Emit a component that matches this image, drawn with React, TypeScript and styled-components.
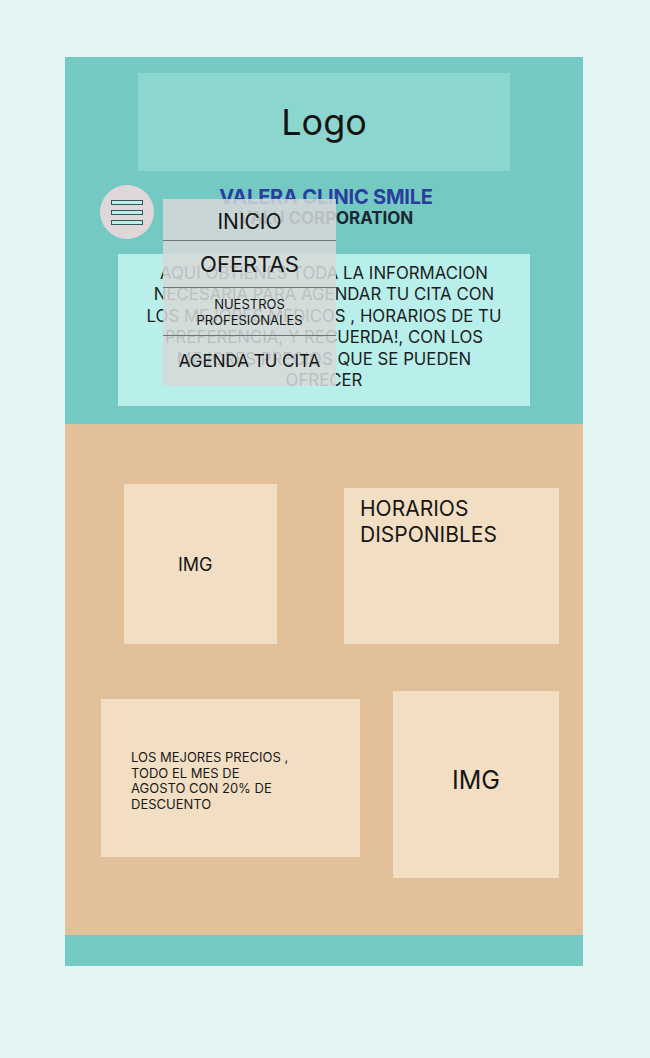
import React from "react";
import styled, { createGlobalStyle } from "styled-components";

const GlobalStyle = createGlobalStyle`
  html, body {
    margin: 0;
    padding: 0;
    background: #e3f5f3;
    font-family: Inter, "Noto Sans", sans-serif;
    color: #1c1c1c;
  }
`;

const Page = styled.div`
  width: 650px;
  min-height: 1058px;
  padding-top: 57px;
  box-sizing: border-box;
`;

const Frame = styled.div`
  position: relative;
  width: 518px;
  margin-left: 65px;
  display: flex;
  flex-direction: column;
`;

const Header = styled.header`
  background: #74c9c2;
  padding: 16px 0 18px;
  display: flex;
  flex-direction: column;
`;

const LogoBox = styled.div`
  width: 372px;
  height: 98px;
  margin-left: 73px;
  background: #8bd7d0;
  display: flex;
  align-items: center;
  justify-content: center;
  font-size: 36px;
  color: #141414;
`;

const TitleBlock = styled.div`
  margin-top: 15px;
  margin-left: 4px;
  display: flex;
  flex-direction: column;
  align-items: center;
  font-weight: 700;
`;

const TitleMain = styled.div`
  font-size: 20px;
  line-height: 22px;
  letter-spacing: -0.2px;
  color: #2b3c9e;
`;

const TitleSub = styled.div`
  font-size: 17px;
  line-height: 20px;
  letter-spacing: -0.1px;
  color: #1b2733;
`;

const InfoBox = styled.div`
  margin: 26px 0 0 53px;
  width: 412px;
  height: 152px;
  box-sizing: border-box;
  padding-top: 9px;
  background: #b8efeb;
  text-align: center;
  font-size: 16.8px;
  line-height: 21.4px;
  white-space: pre-line;
  color: #1d1d1d;
`;

const MenuButton = styled.button`
  position: absolute;
  left: 35px;
  top: 128px;
  width: 54px;
  height: 54px;
  border-radius: 50%;
  border: none;
  padding: 0;
  background: #e0d7da;
  display: flex;
  flex-direction: column;
  align-items: center;
  justify-content: center;
  gap: 5px;
`;

const Bar = styled.span`
  display: block;
  width: 30px;
  height: 3px;
  background: #bdeee8;
  border: 1px solid #35565b;
`;

const Dropdown = styled.nav`
  position: absolute;
  left: 98px;
  top: 142px;
  width: 173px;
  background: rgba(214, 216, 216, 0.86);
  display: flex;
  flex-direction: column;
`;

const MenuItem = styled.div<{ $h: number; $size: number; $divider?: boolean; $pt?: number }>`
  height: ${p => p.$h}px;
  padding-top: ${p => p.$pt || 0}px;
  font-size: ${p => p.$size}px;
  line-height: ${p => Math.round(p.$size * 1.25)}px;
  border-bottom: ${p => (p.$divider ? "1.5px solid #6e7676" : "none")};
  box-sizing: border-box;
  display: flex;
  align-items: center;
  justify-content: center;
  text-align: center;
  white-space: pre-line;
  color: #151515;
`;

const Body = styled.main`
  background: #e2c09a;
  height: 511px;
  box-sizing: border-box;
  padding-top: 60px;
  display: flex;
  flex-direction: column;
  gap: 47px;
`;

const Row = styled.div<{ $left: number; $gap: number }>`
  display: flex;
  align-items: flex-start;
  padding-left: ${p => p.$left}px;
  gap: ${p => p.$gap}px;
`;

const Card = styled.div<{ $w: number; $h: number; $mt?: number }>`
  width: ${p => p.$w}px;
  height: ${p => p.$h}px;
  margin-top: ${p => p.$mt || 0}px;
  background: #f2dfc3;
  box-sizing: border-box;
  display: flex;
`;

const ImgLabel = styled.div<{ $size: number; $left?: number; $lift?: number }>`
  font-size: ${p => p.$size}px;
  margin: ${p => (p.$left ? `auto 0 auto ${p.$left}px` : "auto")};
  padding-bottom: ${p => p.$lift || 0}px;
  color: #161616;
`;

const ScheduleTitle = styled.div`
  padding: 8px 0 0 16px;
  font-size: 21px;
  line-height: 26px;
  color: #161616;
`;

const PromoText = styled.div`
  padding: 51px 0 0 30px;
  font-size: 13px;
  line-height: 15.7px;
  white-space: pre-line;
  color: #1a1a1a;
`;

const Footer = styled.footer`
  background: #74c9c2;
  height: 31px;
`;

const infoText =
  "AQUI OBTIENES TODA LA INFORMACION\nNECESARIA PARA AGENDAR TU CITA CON\nLOS MEJORES MEDICOS , HORARIOS DE TU\nPREFERENCIA, Y RECUERDA!, CON LOS\nMEJORES PRECIOS QUE SE PUEDEN\nOFRECER";

export default function App() {
  return (
    <Page>
      <GlobalStyle />
      <Frame>
        <Header>
          <LogoBox>Logo</LogoBox>
          <TitleBlock>
            <TitleMain>VALERA CLINIC SMILE</TitleMain>
            <TitleSub>VALU CORPORATION</TitleSub>
          </TitleBlock>
          <InfoBox>{infoText}</InfoBox>
        </Header>
        <Body>
          <Row $left={59} $gap={67}>
            <Card $w={153} $h={160}>
              <ImgLabel $size={18} $left={54}>IMG</ImgLabel>
            </Card>
            <Card $w={215} $h={156} $mt={4}>
              <ScheduleTitle>
                HORARIOS
                <br />
                DISPONIBLES
              </ScheduleTitle>
            </Card>
          </Row>
          <Row $left={36} $gap={33}>
            <Card $w={259} $h={158} $mt={8}>
              <PromoText>
                {"LOS MEJORES PRECIOS ,\nTODO EL MES DE\nAGOSTO CON 20% DE\nDESCUENTO"}
              </PromoText>
            </Card>
            <Card $w={166} $h={187}>
              <ImgLabel $size={25} $lift={10}>IMG</ImgLabel>
            </Card>
          </Row>
        </Body>
        <Footer />

        <MenuButton aria-label="menu">
          <Bar />
          <Bar />
          <Bar />
        </MenuButton>
        <Dropdown>
          <MenuItem $h={42} $size={21} $pt={4} $divider>INICIO</MenuItem>
          <MenuItem $h={47} $size={22} $divider>OFERTAS</MenuItem>
          <MenuItem $h={48} $size={13} $divider>
            {"NUESTROS\nPROFESIONALES"}
          </MenuItem>
          <MenuItem $h={50} $size={17}>AGENDA TU CITA</MenuItem>
        </Dropdown>
      </Frame>
    </Page>
  );
}
